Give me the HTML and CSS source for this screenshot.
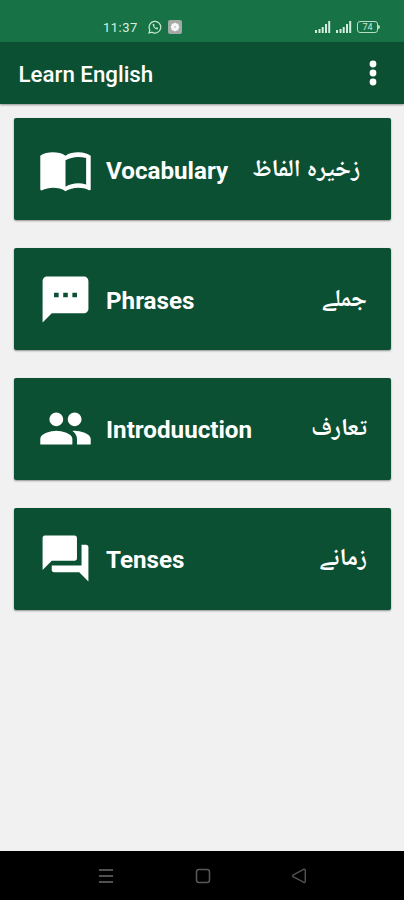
FILE: index.html
```html
<!DOCTYPE html>
<html lang="en">
<head>
<meta charset="utf-8">
<title>Learn English</title>
<link rel="stylesheet" href="styles.css">
</head>
<body>
<div class="status">
  <span class="time">11:37</span>
  <svg class="wa" width="14" height="14" viewBox="0 0 14 14" fill="none" stroke="#c9e8d5" stroke-width="1.2"><path d="M1 13l.8-3.1A5.8 5.8 0 1 1 4 12.2z"/><path d="M4.6 4.2c.2 2.8 2.2 4.8 5 5.3l.6-1.4-1.5-.8-.8.6c-.9-.4-1.4-1-1.8-1.8l.6-.8-.7-1.5z" fill="#c9e8d5" stroke="none"/></svg>
  <svg class="app" width="14" height="14" viewBox="0 0 14 14"><rect width="14" height="14" rx="2" fill="#a3aaa6"/><path d="M7 2.5l1.5 1 1.8.2.2 1.8 1 1.5-1 1.5-.2 1.8-1.8.2-1.5 1-1.5-1-1.8-.2-.2-1.8-1-1.5 1-1.5.2-1.8 1.8-.2z" fill="#f4f7f5"/><circle cx="7" cy="7" r="1" fill="#c5cac7"/></svg>
  <span class="spacer"></span>
  <svg class="signal" width="16" height="12" viewBox="0 0 16 12" fill="#d3ebdc"><path d="M0 9h2v3H0zM3.5 8h2v4h-2zM6.7 6h2v6h-2zM10 3h2v9h-2zM13.2 0h2v12h-2z"/></svg>
  <svg class="signal" width="16" height="12" viewBox="0 0 16 12" fill="#d3ebdc"><path d="M0 9h2v3H0zM3.5 8h2v4h-2zM6.7 6h2v6h-2zM10 3h2v9h-2zM13.2 0h2v12h-2z"/></svg>
  <span class="battery"><span class="level">74</span></span>
</div>
<header class="bar">
  <h1>Learn English</h1>
  <svg width="8" height="26" viewBox="0 0 8 26" fill="#fff"><circle cx="4" cy="4" r="3.4"/><circle cx="4" cy="13" r="3.4"/><circle cx="4" cy="22" r="3.4"/></svg>
</header>
<main>
  <section class="card first">
    <svg class="icon" viewBox="0 0 24 24"><path d="M21 5c-1.11-.35-2.33-.5-3.5-.5-1.95 0-4.05.4-5.5 1.5-1.45-1.1-3.55-1.5-5.5-1.5S2.45 4.9 1 6v14.65c0 .25.25.5.5.5.1 0 .15-.05.25-.05C3.1 20.45 5.05 20 6.5 20c1.95 0 4.05.4 5.5 1.5 1.35-.85 3.8-1.5 5.5-1.5 1.65 0 3.35.3 4.75 1.05.1.05.15.05.25.05.25 0 .5-.25.5-.5V6c-.6-.45-1.25-.75-2-1zm0 13.5c-1.1-.35-2.3-.5-3.5-.5-1.7 0-4.15.65-5.5 1.5V8c1.35-.85 3.8-1.5 5.5-1.5 1.2 0 2.4.15 3.5.5v11.5z"/></svg>
    <span class="label">Vocabulary</span><span class="urdu" lang="ur" dir="rtl">زخیرہ الفاظ</span>
  </section>
  <section class="card">
    <svg class="icon" viewBox="0 0 24 24"><path d="M20 2H4c-1.1 0-1.99.9-1.99 2L2 22l4-4h14c1.1 0 2-.9 2-2V4c0-1.1-.9-2-2-2zM9 11H7V9h2v2zm4 0h-2V9h2v2zm4 0h-2V9h2v2z"/></svg>
    <span class="label">Phrases</span><span class="urdu" lang="ur" dir="rtl">جملے</span>
  </section>
  <section class="card">
    <svg class="icon" viewBox="0 0 24 24"><path d="M16 11c1.66 0 2.99-1.34 2.99-3S17.66 5 16 5c-1.66 0-3 1.34-3 3s1.34 3 3 3zm-8 0c1.66 0 2.99-1.34 2.99-3S9.66 5 8 5C6.34 5 5 6.34 5 8s1.34 3 3 3zm0 2c-2.33 0-7 1.17-7 3.5V19h14v-2.5c0-2.33-4.67-3.5-7-3.5zm8 0c-.29 0-.62.02-.97.05 1.16.84 1.97 1.97 1.97 3.45V19h6v-2.5c0-2.33-4.67-3.5-7-3.5z"/></svg>
    <span class="label">Introduuction</span><span class="urdu" lang="ur" dir="rtl">تعارف</span>
  </section>
  <section class="card">
    <svg class="icon" viewBox="0 0 24 24"><path d="M21 6h-2v9H6v2c0 .55.45 1 1 1h11l4 4V7c0-.55-.45-1-1-1zm-4 6V3c0-.55-.45-1-1-1H3c-.55 0-1 .45-1 1v14l4-4h10c.55 0 1-.45 1-1z"/></svg>
    <span class="label">Tenses</span><span class="urdu" lang="ur" dir="rtl">زمانے</span>
  </section>
</main>
<nav class="nav">
  <svg width="16" height="16" viewBox="0 0 16 16" stroke="#505050" stroke-width="1.8"><path d="M1 2h14M1 8h14M1 14h14"/></svg>
  <svg width="16" height="16" viewBox="0 0 16 16" fill="none" stroke="#585858" stroke-width="1.5"><rect x="1.5" y="1.5" width="13" height="13" rx="2.5"/></svg>
  <svg width="16" height="16" viewBox="0 0 16 16" fill="none" stroke="#505050" stroke-width="1.5" stroke-linejoin="round"><path d="M2 7.2L12.5 1.3Q14.3.8 14.3 2.5V13.2Q14.3 14.9 12.5 14.2L2 8.6Q1.3 7.9 2 7.2z"/></svg>
</nav>
</body>
</html>
```
FILE: styles.css
```css
* { box-sizing: border-box; }
body {
  margin: 0;
  height: 900px;
  display: flex;
  flex-direction: column;
  background: #f1f1f1;
  font-family: Roboto, "Noto Naskh Arabic", "Noto Sans Arabic", "DejaVu Sans", sans-serif;
  color: #fff;
}
svg { display: block; flex: none; }
.status {
  height: 42px;
  padding: 12px 26px 0 103px;
  display: flex;
  align-items: center;
  background: #177245;
}
.time { font-size: 13px; letter-spacing: .5px; color: #d9efe1; width: 44px; }
.wa { margin-left: 1px; }
.app { margin-left: 6px; }
.spacer { flex: 1; }
.signal { margin-right: 5px; }
.battery {
  position: relative;
  width: 21px;
  height: 12px;
  border: 1.5px solid #b5dcc4;
  border-radius: 3px;
  display: flex;
  align-items: center;
  justify-content: center;
}
.battery::after {
  content: "";
  position: absolute;
  right: -3px;
  top: 3px;
  width: 2px;
  height: 4px;
  border-radius: 0 2px 2px 0;
  background: #b5dcc4;
}
.level { font-size: 9px; line-height: 9px; color: #c9e8d5; }
.bar {
  height: 62px;
  padding: 0 27px 0 18.5px;
  display: flex;
  align-items: center;
  justify-content: space-between;
  background: #0c5033;
  box-shadow: 0 1px 2px rgba(0, 0, 0, .4);
}
h1 { margin: 1px 0 0; font-size: 22.3px; line-height: 28px; font-weight: 500; }
main {
  flex: 1;
  padding: 14.4px 13px 0 14px;
  display: flex;
  flex-direction: column;
  gap: 27.8px;
}
.card {
  height: 102px;
  padding: 0 24px;
  display: flex;
  align-items: center;
  background: #0c5033;
  border-radius: 2px;
  box-shadow: 0 1px 2px rgba(0, 0, 0, .4);
}
.first { padding-right: 31px; }
.icon { width: 55px; height: 55px; fill: #fff; }
.label { margin: 3px 0 0 13px; font-size: 24.2px; font-weight: 700; }
.urdu { margin: 2px 0 0 auto; font-size: 24.2px; font-weight: 700; white-space: nowrap; }
.nav {
  height: 49px;
  padding: 0 97px 0 98px;
  display: flex;
  align-items: center;
  justify-content: space-between;
  background: #000;
}
```
